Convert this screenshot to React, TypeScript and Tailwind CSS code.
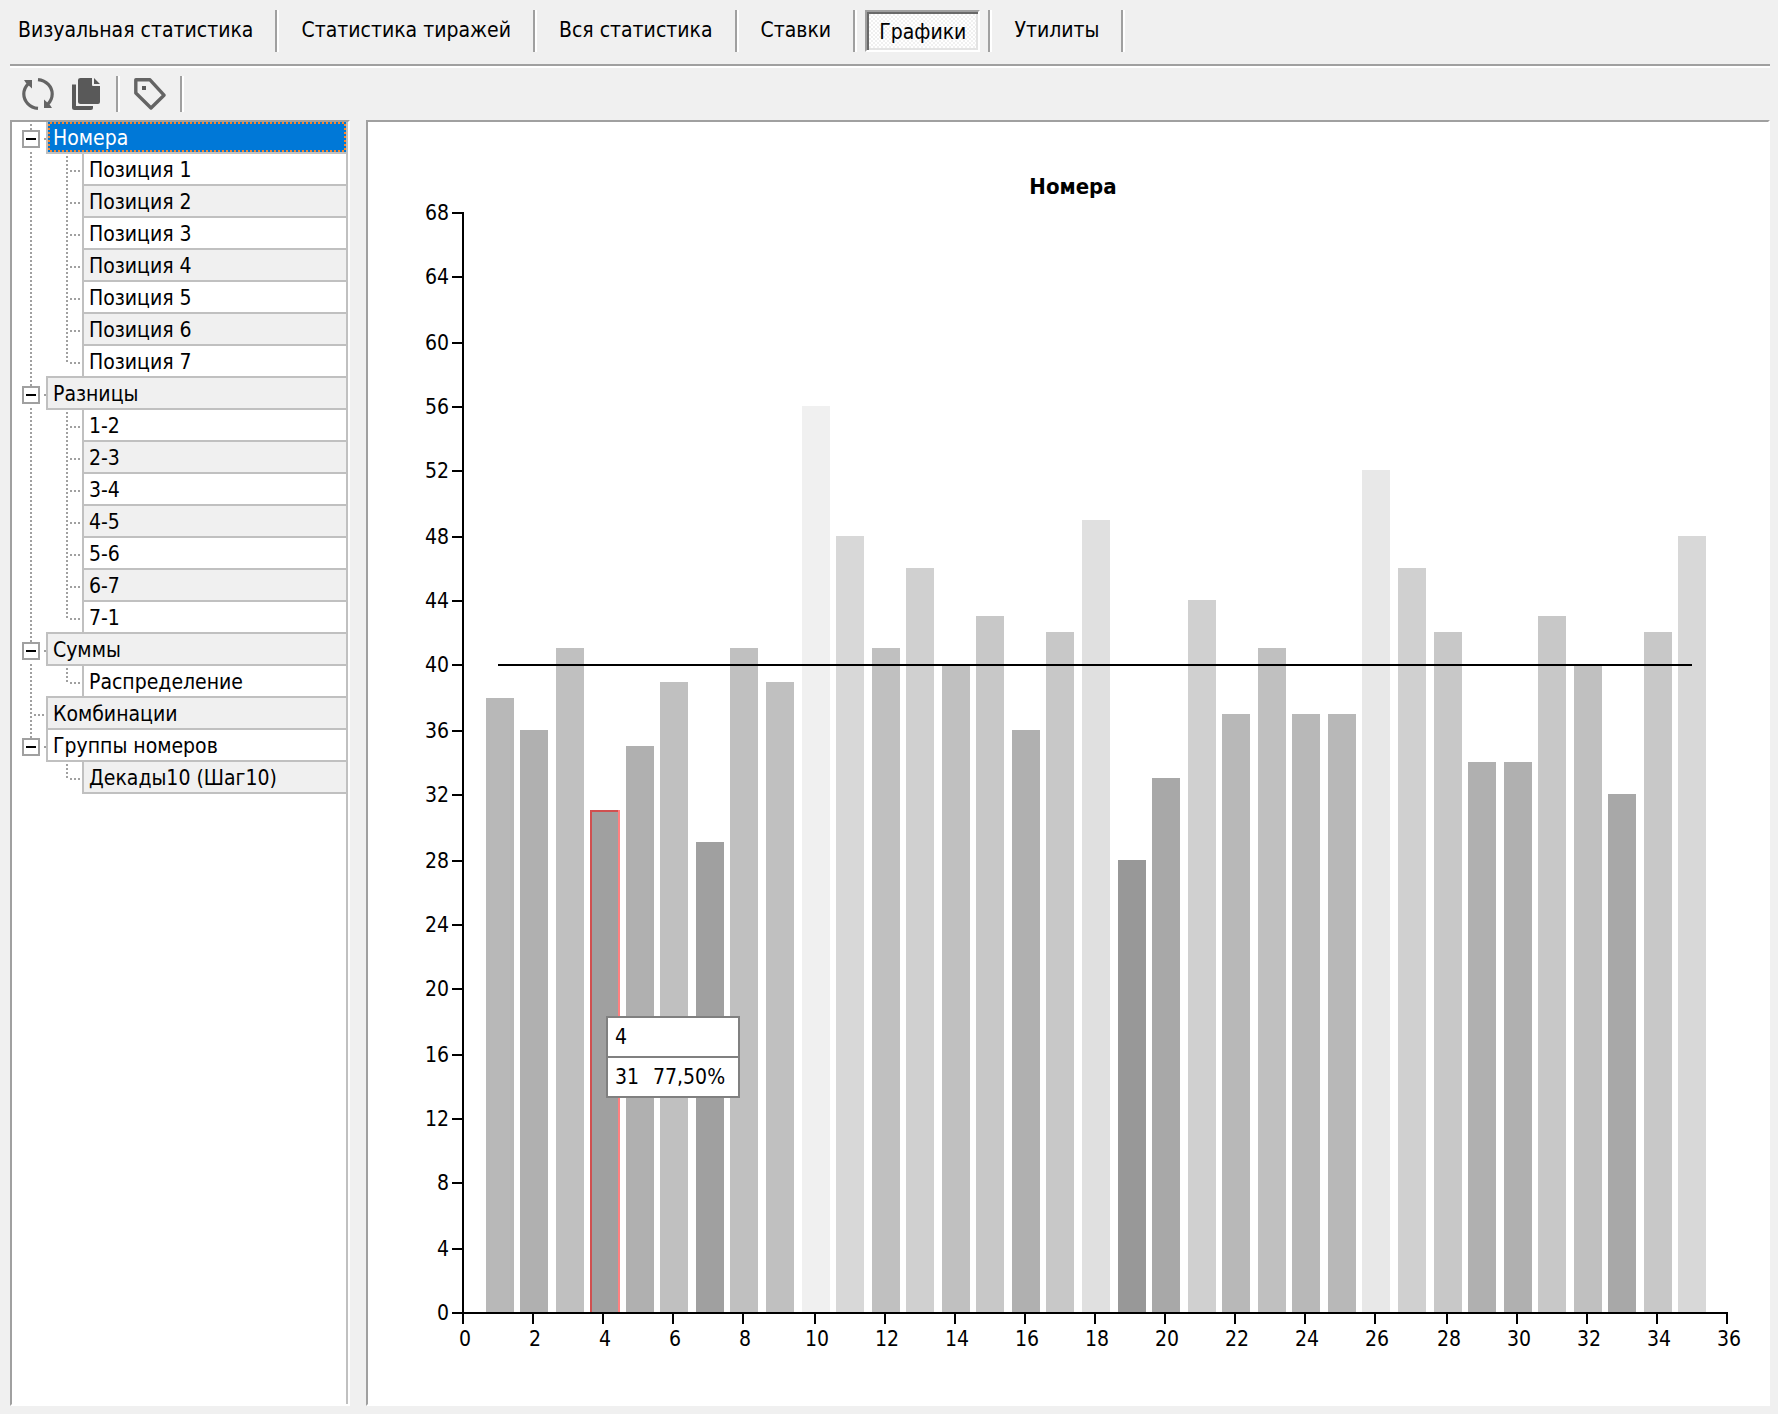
import { useLayoutEffect, useRef, useState } from 'react';

const TABS = ['Визуальная статистика', 'Статистика тиражей', 'Вся статистика', 'Ставки', 'Графики', 'Утилиты'];

type Group = { label: string; children: string[] };

const TREE: Group[] = [
  {
    label: 'Номера',
    children: ['Позиция 1', 'Позиция 2', 'Позиция 3', 'Позиция 4', 'Позиция 5', 'Позиция 6', 'Позиция 7'],
  },
  { label: 'Разницы', children: ['1-2', '2-3', '3-4', '4-5', '5-6', '6-7', '7-1'] },
  { label: 'Суммы', children: ['Распределение'] },
  { label: 'Комбинации', children: [] },
  { label: 'Группы номеров', children: ['Декады10 (Шаг10)'] },
];

const VALUES = [
  38, 36, 41, 31, 35, 39, 29, 41, 39, 56, 48, 41, 46, 40, 43, 36, 42, 49, 28, 33, 44, 37, 41, 37, 37, 52, 46, 42, 34,
  34, 43, 40, 32, 42, 48,
];

const X_MAX = 36;
const Y_MAX = 68;
const AVERAGE = 40;

/* Upper limit of each value band and the grey that fills its bars. */
const SHADES: [number, string][] = [
  [28, '#989898'],
  [31, '#a0a0a0'],
  [33, '#a8a8a8'],
  [36, '#b0b0b0'],
  [38, '#b8b8b8'],
  [41, '#c0c0c0'],
  [43, '#c8c8c8'],
  [46, '#d0d0d0'],
  [48, '#d8d8d8'],
  [51, '#e0e0e0'],
  [54, '#e8e8e8'],
  [Infinity, '#f0f0f0'],
];

const shadeOf = (value: number) => SHADES.find(([limit]) => value <= limit)![1];

/* Everything in the chart is snapped to a grid of two pixels. */
const snap = (n: number) => Math.round(n / 2) * 2;

function Separator({ className = '' }: { className?: string }) {
  return <span className={`w-1 border-l-2 border-r-2 border-l-[#a0a0a0] border-r-white ${className}`} />;
}

function Tabs() {
  const [active, setActive] = useState('Графики');
  return (
    <nav className="flex items-stretch pt-2.5 pl-1">
      {TABS.map((tab, i) => (
        <div key={tab} className="flex h-[42px]">
          <button
            type="button"
            onClick={() => setActive(tab)}
            aria-pressed={tab === active}
            className={`mr-2 border-2 px-3 leading-6 ${i === 0 ? '' : 'ml-2'} ${
              tab === active
                ? 'border-t-[#a0a0a0] border-r-white border-b-white border-l-[#a0a0a0] bg-[repeating-conic-gradient(#fff_0_25%,#f0f0f0_0_50%)] bg-[length:4px_4px] pt-0.5 shadow-[inset_2px_2px_#696969,inset_-2px_-2px_#e3e3e3]'
                : 'border-transparent pb-0.5'
            }`}
          >
            {tab}
          </button>
          <Separator />
        </div>
      ))}
    </nav>
  );
}

function RefreshIcon() {
  return (
    <svg viewBox="0 0 32 32" className="size-8" aria-hidden="true">
      <path d="M16 1.6 C24.5 2.4 30.2 9 30.2 16 C30.2 20 28.6 23.4 25.6 26.4" fill="none" stroke="#646464" strokeWidth="3.2" />
      <path d="M16 30.4 C7.5 29.6 1.8 23 1.8 16 C1.8 12 3.4 8.6 6.4 5.6" fill="none" stroke="#646464" strokeWidth="3.2" />
      <path d="M22 21.5 V30 H30 L28 27 Z" fill="#646464" />
      <path d="M10 10.5 V2 H2 L4 5 Z" fill="#646464" />
    </svg>
  );
}

function CopyIcon() {
  return (
    <svg viewBox="0 0 32 32" className="size-8" aria-hidden="true">
      <path
        d="M8.5 0 H20 V7 Q20 8 21 8 H28 V24 Q28 26 26 26 H8.5 Q6 26 6 24 V2 Q6 0 8.5 0 Z M22 0 L28 6 H22 Z"
        fill="#595959"
      />
      <path d="M0 6.5 H4 V28 H21 V30 Q21 32 19 32 H2.5 Q0 32 0 29.5 Z" fill="#595959" />
    </svg>
  );
}

function TagIcon() {
  return (
    <svg viewBox="0 0 32 32" className="size-8" aria-hidden="true">
      <path d="M1.8 1.8 H16 L30 17.2 L17 30 L1.8 15 Z" fill="none" stroke="#646464" strokeWidth="3.4" strokeLinejoin="round" />
      <rect x="8" y="8" width="4" height="4" fill="#595959" />
    </svg>
  );
}

function Toolbar() {
  return (
    <div className="flex h-[52px] items-center pl-3">
      <button type="button" aria-label="Обновить">
        <RefreshIcon />
      </button>
      <button type="button" aria-label="Копировать" className="ml-[18px]">
        <CopyIcon />
      </button>
      <Separator className="ml-3 h-9" />
      <button type="button" aria-label="Метки" className="ml-3.5">
        <TagIcon />
      </button>
      <Separator className="ml-3.5 h-9" />
    </div>
  );
}

const V_DOTS = 'w-0.5 bg-[linear-gradient(transparent_50%,#a0a0a0_0)] bg-[length:2px_4px]';
const H_DOTS = 'h-0.5 bg-[linear-gradient(90deg,transparent_50%,#a0a0a0_0)] bg-[length:4px_2px]';

type CellProps = { label: string; striped: boolean; selected: boolean; onSelect: () => void };

function TreeCell({ label, striped, selected, onSelect }: CellProps) {
  return (
    <button
      type="button"
      onClick={onSelect}
      className="-mt-0.5 flex h-[34px] min-w-0 flex-1 border-2 border-r-0 border-[#c0c0c0] text-left"
    >
      {selected ? (
        <span className="flex-1 bg-[repeating-conic-gradient(#ff8728_0_25%,#0078d7_0_50%)] bg-[length:4px_4px] p-0.5">
          <span className="block h-[26px] truncate bg-[#0078d7] pl-[3px] leading-7 text-white">{label}</span>
        </span>
      ) : (
        <span className={`h-[30px] flex-1 truncate pl-[5px] leading-8 ${striped ? 'bg-[#f0f0f0]' : 'bg-white'}`}>
          {label}
        </span>
      )}
    </button>
  );
}

function Tree() {
  const [selected, setSelected] = useState('Номера');
  const [closed, setClosed] = useState<string[]>([]);
  let index = 0;

  return (
    <div className="w-[340px] shrink-0 overflow-hidden border-2 border-t-[#a0a0a0] border-r-white border-b-white border-l-[#a0a0a0] bg-white">
      <ul role="tree" className="h-full border-r-2 border-[#c0c0c0]">
        {TREE.map((group, g) => {
          const lastGroup = g === TREE.length - 1;
          const open = !closed.includes(group.label);
          const rootStriped = index++ % 2 === 0;
          return (
            <li key={group.label} role="treeitem" aria-expanded={open} aria-selected={selected === group.label}>
              <div className="flex h-8">
                {group.children.length > 0 ? (
                  <div className="flex w-[34px] shrink-0 pl-2.5">
                    <div className="flex w-[18px] flex-col items-center">
                      <span className={`h-2 ${V_DOTS}`} />
                      <button
                        type="button"
                        aria-label={`${open ? 'Свернуть' : 'Развернуть'}: ${group.label}`}
                        onClick={() =>
                          setClosed(open ? [...closed, group.label] : closed.filter((c) => c !== group.label))
                        }
                        className="flex size-[18px] shrink-0 items-center justify-center border-2 border-[#a0a0a0] bg-white"
                      >
                        <span className="h-0.5 w-2.5 bg-black" />
                      </button>
                      {!lastGroup && <span className={`mt-0.5 h-1 ${V_DOTS}`} />}
                    </div>
                    <span className="mt-4 ml-1 h-0.5 w-0.5 bg-[#a0a0a0]" />
                  </div>
                ) : (
                  <div className="flex w-[34px] shrink-0 pl-[18px]">
                    <span className={V_DOTS} />
                    <span className={`mt-4 w-3.5 ${H_DOTS}`} />
                  </div>
                )}
                <TreeCell
                  label={group.label}
                  striped={rootStriped}
                  selected={selected === group.label}
                  onSelect={() => setSelected(group.label)}
                />
              </div>
              {open && group.children.length > 0 && (
                <ul role="group">
                  {group.children.map((child, c) => {
                    const striped = index++ % 2 === 0;
                    return (
                      <li key={child} role="treeitem" aria-selected={selected === child} className="flex h-8">
                        <div className="flex w-[70px] shrink-0 pl-[18px]">
                          <span className={lastGroup ? 'w-0.5' : V_DOTS} />
                          <span
                            className={`ml-[34px] ${V_DOTS} ${c === group.children.length - 1 ? 'h-4' : ''}`}
                          />
                          <span className={`mt-4 w-3.5 ${H_DOTS}`} />
                        </div>
                        <TreeCell
                          label={child}
                          striped={striped}
                          selected={selected === child}
                          onSelect={() => setSelected(child)}
                        />
                      </li>
                    );
                  })}
                </ul>
              )}
            </li>
          );
        })}
      </ul>
    </div>
  );
}

function Chart() {
  const box = useRef<HTMLDivElement>(null);
  const [size, setSize] = useState({ width: 1400, height: 1282 });
  const [active, setActive] = useState(4);

  useLayoutEffect(() => {
    const el = box.current!;
    const measure = () => setSize({ width: el.clientWidth, height: el.clientHeight });
    measure();
    const observer = new ResizeObserver(measure);
    observer.observe(el);
    return () => observer.disconnect();
  }, []);

  const left = 94;
  const right = size.width - 42;
  const top = 90;
  const bottom = size.height - 92;
  const xAt = (n: number) => snap(left + ((right - left) * n) / X_MAX);
  const yAt = (n: number) => snap(bottom - ((bottom - top) * n) / Y_MAX);

  const xTicks = Array.from({ length: X_MAX / 2 + 1 }, (_, i) => i * 2);
  const yTicks = Array.from({ length: Y_MAX / 4 + 1 }, (_, i) => i * 4);
  const activeValue = VALUES[active - 1];
  const percent = ((activeValue / AVERAGE) * 100).toFixed(2).replace('.', ',');
  const barLeft = (n: number) => xAt(n) - 12;

  return (
    <section className="min-w-0 flex-1 border-2 border-t-[#a0a0a0] border-r-white border-b-white border-l-[#a0a0a0] bg-white">
      <div ref={box} className="relative h-full overflow-hidden">
        <svg
          width={size.width}
          height={size.height}
          className="absolute inset-0"
          shapeRendering="crispEdges"
          role="img"
          aria-label="Номера"
        >
          <text x={size.width / 2 + 5} y={72} textAnchor="middle" className="text-[22px] font-bold">
            Номера
          </text>
          {VALUES.map((value, i) => {
            const n = i + 1;
            const y = yAt(value);
            return (
              <rect
                key={n}
                x={barLeft(n)}
                y={y}
                width={28}
                height={bottom - y}
                fill={shadeOf(value)}
                onMouseEnter={() => setActive(n)}
              />
            );
          })}
          <g>
            <rect x={barLeft(active)} y={yAt(activeValue)} width={2} height={bottom - yAt(activeValue)} fill="#d05050" />
            <rect x={barLeft(active)} y={yAt(activeValue)} width={28} height={2} fill="#d05050" />
            <rect
              x={barLeft(active) + 28}
              y={yAt(activeValue)}
              width={2}
              height={bottom - yAt(activeValue)}
              fill="#ff8080"
            />
          </g>
          <rect
            x={xAt(1)}
            y={yAt(AVERAGE)}
            width={xAt(VALUES.length) - xAt(1) + 2}
            height={2}
            className="pointer-events-none"
          />
          <rect x={left} y={top} width={2} height={bottom - top} />
          <rect x={left} y={bottom} width={right - left + 2} height={2} />
          {yTicks.map((n) => (
            <g key={n}>
              <rect x={left - 10} y={yAt(n)} width={10} height={2} />
              <text x={left - 13} y={yAt(n) + 8} textAnchor="end" className="text-[21px]">
                {n}
              </text>
            </g>
          ))}
          {xTicks.map((n) => (
            <g key={n}>
              <rect x={xAt(n)} y={bottom} width={2} height={12} />
              <text x={xAt(n) + 3} y={bottom + 34} textAnchor="middle" className="text-[21px]">
                {n}
              </text>
            </g>
          ))}
        </svg>
        <div
          className="pointer-events-none absolute w-[134px] border-2 border-[#808080] bg-white"
          style={{ left: barLeft(active) + 16, top: yAt(activeValue) + 206 }}
        >
          <div className="h-10 border-b-2 border-[#808080] pl-[7px] leading-[38px]">{active}</div>
          <div className="flex h-[38px] gap-3.5 pl-[7px] leading-[38px]">
            <span>{activeValue}</span>
            <span>{percent}%</span>
          </div>
        </div>
      </div>
    </section>
  );
}

export default function App() {
  return (
    <div className="flex min-h-screen flex-col bg-[#f0f0f0] pr-2 pb-2 font-['DejaVu_Sans_Condensed','DejaVu_Sans',sans-serif] text-[21px] text-black">
      <Tabs />
      <div className="mt-3 ml-2.5 h-1 border-t-2 border-b-2 border-t-[#a0a0a0] border-b-white" />
      <div className="ml-2.5">
        <Toolbar />
      </div>
      <main className="ml-2.5 flex flex-1 gap-4">
        <Tree />
        <Chart />
      </main>
    </div>
  );
}
